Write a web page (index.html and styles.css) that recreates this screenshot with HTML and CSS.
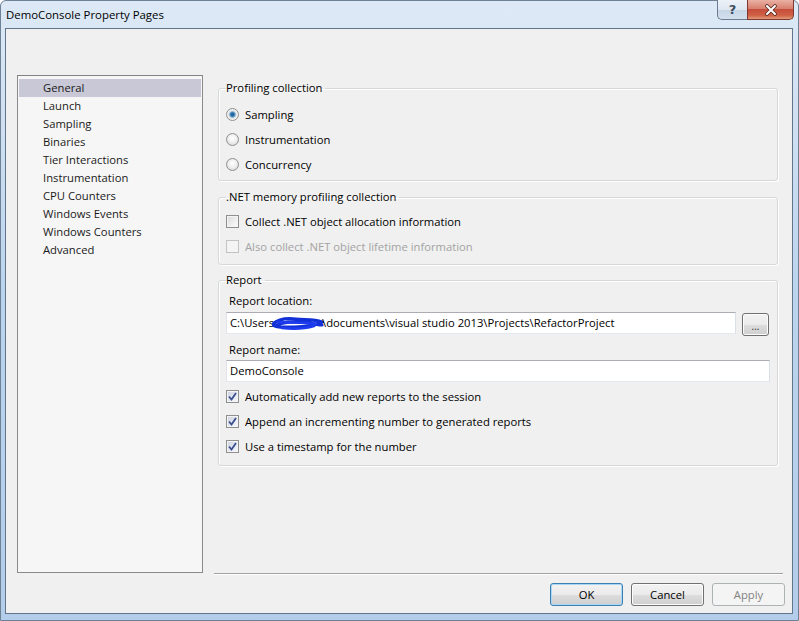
FILE: index.html
```html
<!DOCTYPE html>
<html>
<head>
<meta charset="utf-8">
<link rel="stylesheet" href="styles.css">
</head>
<body>
<div class="window">
  <div class="titlebar">
    <span class="title">DemoConsole Property Pages</span>
    <div class="caption-btns">
      <div class="cap help">?</div>
      <div class="cap close">
        <svg width="14" height="12" viewBox="0 0 14 12"><path d="M3 2 L11 10 M11 2 L3 10" stroke="#5a2a24" stroke-width="3.6" stroke-linecap="round"/><path d="M3 2 L11 10 M11 2 L3 10" stroke="#ffffff" stroke-width="2" stroke-linecap="round"/></svg>
      </div>
    </div>
  </div>
  <div class="client">
    <div class="main">
      <ul class="nav">
        <li class="sel">General</li>
        <li>Launch</li>
        <li>Sampling</li>
        <li>Binaries</li>
        <li>Tier Interactions</li>
        <li>Instrumentation</li>
        <li>CPU Counters</li>
        <li>Windows Events</li>
        <li>Windows Counters</li>
        <li>Advanced</li>
      </ul>
      <div class="pane">
        <fieldset class="group g1">
          <legend>Profiling collection</legend>
          <div class="row"><span class="radio on"></span><span>Sampling</span></div>
          <div class="row"><span class="radio"></span><span>Instrumentation</span></div>
          <div class="row"><span class="radio"></span><span>Concurrency</span></div>
        </fieldset>
        <fieldset class="group g2">
          <legend>.NET memory profiling collection</legend>
          <div class="row"><span class="check"></span><span>Collect .NET object allocation information</span></div>
          <div class="row disabled"><span class="check dis"></span><span>Also collect .NET object lifetime information</span></div>
        </fieldset>
        <fieldset class="group g3">
          <legend>Report</legend>
          <div class="label">Report location:</div>
          <div class="field-row">
            <div class="input wide">C:\Users<svg class="scribble" width="52" height="16" viewBox="0 0 52 16"><path d="M1 9 C6 4 14 3 24 4 C34 5 42 4 50 7 C44 10 34 12 22 12 C14 12 7 13 3 11 C10 7 24 6 38 8 C44 9 48 10 50 10" stroke="#1230d8" stroke-width="3.2" fill="none" stroke-linecap="round"/><path d="M6 7 C16 8 30 7 44 9 M10 13 C20 14 32 14 42 11" stroke="#1d3cf0" stroke-width="2.6" fill="none" stroke-linecap="round"/></svg>\documents\visual studio 2013\Projects\RefactorProject</div>
            <div class="btn browse">...</div>
          </div>
          <div class="label l2">Report name:</div>
          <div class="input full">DemoConsole</div>
          <div class="checks">
            <div class="row"><span class="check on"><svg width="9" height="9" viewBox="0 0 9 9"><path d="M1 4.5 L3.5 7.5 L8 1" stroke="#3b4f8f" stroke-width="1.8" fill="none"/></svg></span><span>Automatically add new reports to the session</span></div>
            <div class="row"><span class="check on"><svg width="9" height="9" viewBox="0 0 9 9"><path d="M1 4.5 L3.5 7.5 L8 1" stroke="#3b4f8f" stroke-width="1.8" fill="none"/></svg></span><span>Append an incrementing number to generated reports</span></div>
            <div class="row"><span class="check on"><svg width="9" height="9" viewBox="0 0 9 9"><path d="M1 4.5 L3.5 7.5 L8 1" stroke="#3b4f8f" stroke-width="1.8" fill="none"/></svg></span><span>Use a timestamp for the number</span></div>
          </div>
        </fieldset>
      </div>
    </div>
    <div class="footer">
      <div class="btn default">OK</div>
      <div class="btn">Cancel</div>
      <div class="btn disabled-btn">Apply</div>
    </div>
  </div>
</div>
</body>
</html>
```
FILE: styles.css
```css
* { box-sizing: border-box; }
html, body { margin: 0; padding: 0; }
body {
  width: 799px;
  height: 621px;
  overflow: hidden;
  font-family: "Segoe UI", "Open Sans", sans-serif;
  font-size: 11.25px;
  color: #000;
}
.window {
  width: 799px;
  height: 621px;
  display: flex;
  flex-direction: column;
  padding: 0 5px 6px 4px;
  background: linear-gradient(180deg, #dde9f6 0%, #cfe0f2 20%, #bcd5ee 45%, #b3cdea 100%);
  border: 1px solid #6f8195;
  border-radius: 6px 6px 0 0;
}
.titlebar {
  height: 27px;
  display: flex;
  justify-content: space-between;
  align-items: flex-start;
}
.title {
  padding-top: 6px;
  padding-left: 1px;
  font-size: 11.4px;
  line-height: 16px;
  color: #000;
}
.caption-btns {
  display: flex;
  margin-top: -1px;
  margin-right: -1px;
}
.cap {
  height: 20px;
  display: flex;
  align-items: center;
  justify-content: center;
  border: 1px solid #6c7d92;
  border-top: none;
}
.help {
  width: 30px;
  border-right: none;
  border-radius: 0 0 0 5px;
  background: linear-gradient(180deg, #edf2f8 0%, #dfe7f1 50%, #c6d4e4 51%, #d3e0ee 100%);
  color: #3f4d5e;
  font-weight: bold;
  font-size: 13px;
  font-family: "DejaVu Sans", sans-serif;
}
.close {
  width: 47px;
  border-radius: 0 0 5px 0;
  border-color: #7e3a30;
  background: linear-gradient(180deg, #eab1a4 0%, #d8806f 45%, #c74d3b 50%, #cf5f45 80%, #e29a7a 100%);
}
.client {
  flex: 1;
  display: flex;
  flex-direction: column;
  background: #f0f0f0;
  border: 1px solid #62758a;
}
.main {
  display: flex;
  padding: 46px 9px 0 11px;
  gap: 11px;
}
.nav {
  list-style: none;
  margin: 0;
  padding: 3px 1px 1px;
  width: 186px;
  height: 498px;
  background: #f6f6f6;
  border: 1px solid #8a8a8a;
  border-top-color: #828282;
}
.nav li {
  height: 18px;
  line-height: 18px;
  padding-left: 24px;
  color: #1a1a1a;
}
.nav li.sel {
  background: #c8c8d6;
}
.pane {
  width: 569px;
  height: 499px;
  border-bottom: 1px solid #a0a0a0;
  box-shadow: 0 1px 0 #ffffff;
  padding-top: 5px;
  padding-left: 4px;
}
.group {
  width: 560px;
  margin: 0;
  padding: 0 0 0 7px;
  border: 1px solid #d5d9dc;
  border-radius: 3px;
  box-shadow: inset 1px 1px 0 #fff, 1px 1px 0 #fff;
}
.group legend {
  margin-left: 0px;
  padding: 0 3px 0 0;
  height: 16px;
  line-height: 16px;
  color: #000;
}
.g1 { padding-top: 6px; padding-bottom: 3px; }
.g2 { margin-top: 8px; padding-top: 4px; padding-bottom: 5px; }
.g3 { margin-top: 7px; padding-top: 5px; padding-bottom: 6px; padding-left: 7px; }
.row {
  height: 25px;
  display: flex;
  align-items: center;
  gap: 6px;
}
.row.disabled { color: #a3a3a3; }
.radio {
  width: 13px;
  height: 13px;
  border-radius: 50%;
  border: 1px solid #8e8f8f;
  background: radial-gradient(circle at 50% 40%, #ffffff 0%, #f2f2f2 40%, #d2d2d2 100%);
  flex: none;
}
.radio.on {
  background: radial-gradient(circle at 50% 50%, #1e5f96 0%, #2b6fa8 22%, #6aa3cf 34%, #e4e4e4 48%, #f4f4f4 70%, #d8d8d8 100%);
}
.check {
  width: 13px;
  height: 13px;
  border: 1px solid #8e8f8f;
  background: linear-gradient(135deg, #d9d9d9 0%, #f0f0f0 60%, #ffffff 100%);
  box-shadow: inset 0 0 0 1px #f4f4f4;
  display: flex;
  align-items: center;
  justify-content: center;
  flex: none;
}
.check.on {
  background: linear-gradient(135deg, #cbd0dc 0%, #eaeef6 70%, #fafbfd 100%);
}
.check.dis {
  border-color: #c2c3c5;
  background: #f4f4f4;
}
.label {
  height: 16px;
  line-height: 16px;
  padding-left: 3px;
}
.l2 { margin-top: 6px; }
.field-row {
  display: flex;
  align-items: flex-start;
  gap: 6px;
  margin-top: 3px;
}
.input {
  height: 22px;
  line-height: 20px;
  background: #fff;
  border: 1px solid #e3e9ef;
  border-top-color: #abadb3;
  border-left-color: #e2e3ea;
  border-right-color: #dbdfe6;
  padding-left: 3px;
  white-space: nowrap;
  overflow: hidden;
  display: flex;
  align-items: center;
}
.input.wide { width: 510px; }
.input.full { width: 544px; margin-top: 2px; }
.scribble { flex: none; margin: 0 -2px 0 -2px; }
.checks { margin-top: 2px; }
.btn {
  width: 73px;
  height: 23px;
  display: flex;
  align-items: center;
  justify-content: center;
  border: 1px solid #707070;
  border-radius: 3px;
  background: linear-gradient(180deg, #f2f2f2 0%, #ebebeb 50%, #dddddd 51%, #cfcfcf 100%);
  box-shadow: inset 0 0 0 1px #fcfcfc;
  color: #000;
}
.btn.browse {
  width: 27px;
  height: 23px;
  margin-top: 1px;
  font-size: 10px;
  padding-top: 2px;
  color: #333;
}
.btn.default {
  border-color: #3c7fb1;
  box-shadow: inset 0 0 0 1px #a9d7f4;
}
.btn.disabled-btn {
  border-color: #adb2b5;
  background: #f4f4f4;
  box-shadow: none;
  color: #838383;
}
.footer {
  display: flex;
  justify-content: flex-end;
  gap: 8px;
  padding: 9px 7px 0 0;
}
```
